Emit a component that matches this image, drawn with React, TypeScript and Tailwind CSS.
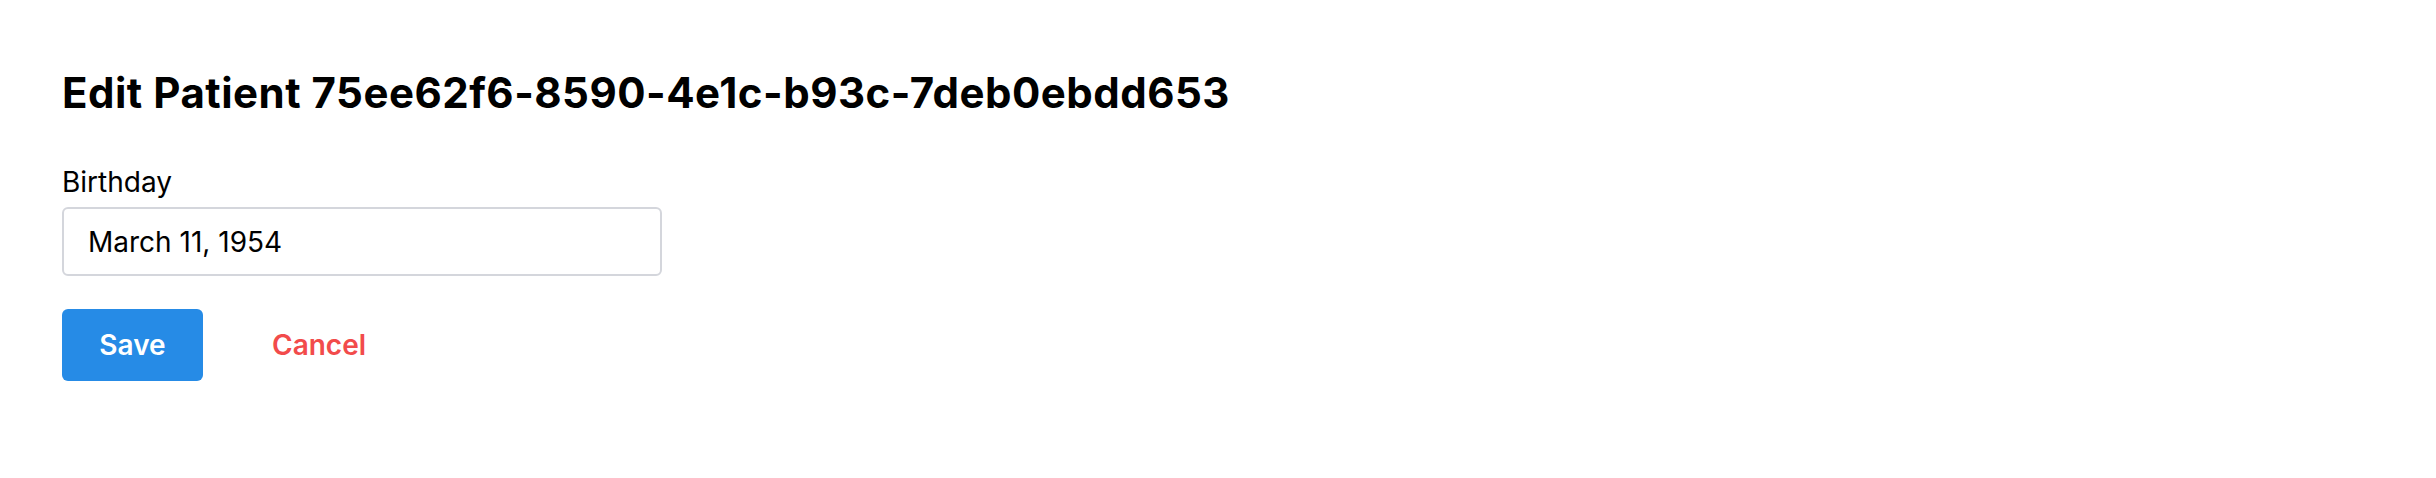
export default function App() {
  return (
    <div className="min-h-[478px] w-full bg-white pl-[62px] pt-[70px] font-['Inter',sans-serif] text-black">
      <h1 className="text-[42px] font-bold leading-[46px] tracking-[0.5px]">
        Edit Patient 75ee62f6-8590-4e1c-b93c-7deb0ebdd653
      </h1>

      <form className="mt-[53px]" onSubmit={(e) => e.preventDefault()}>
        <label htmlFor="birthday" className="block text-[28px] leading-[26px]">
          Birthday
        </label>
        <input
          id="birthday"
          type="text"
          defaultValue="March 11, 1954"
          className="mt-[12px] block h-[69px] w-[600px] rounded-[6px] border-2 border-[#d4d6dc] px-[24px] text-[28px] text-black outline-none"
        />

        <div className="mt-[33px] flex items-center">
          <button
            type="submit"
            className="h-[72px] w-[141px] rounded-[6px] bg-[#268be6] text-[28px] font-semibold text-white"
          >
            Save
          </button>
          <button type="button" className="ml-[69px] text-[28px] font-semibold text-[#f24b4b]">
            Cancel
          </button>
        </div>
      </form>
    </div>
  )
}
